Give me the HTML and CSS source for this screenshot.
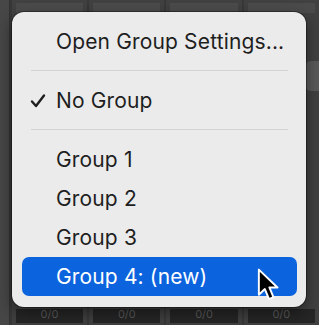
FILE: index.html
```html
<!DOCTYPE html>
<html>
  <head>
    <meta charset="utf-8" />
    <title>Group menu</title>
    <link rel="stylesheet" href="styles.css">
  </head>
  <body>
    <div class="mixer">
      <div class="strip edge"></div>
      <div class="strip">
        <div class="slot"></div>
        <div class="fill"></div>
        <div class="io">0/0</div>
      </div>
      <div class="strip">
        <div class="slot"></div>
        <div class="fill"></div>
        <div class="io">0/0</div>
      </div>
      <div class="strip">
        <div class="slot"></div>
        <div class="fill"></div>
        <div class="io">0/0</div>
      </div>
      <div class="strip">
        <div class="slot"></div>
        <div class="fill"><div class="knob"></div></div>
        <div class="io">0/0</div>
      </div>
    </div>

    <div class="menu">
      <div class="item">Open Group Settings...</div>
      <div class="sep"></div>
      <div class="item">
        <svg class="check" width="16" height="16" viewBox="0 0 16 16">
          <path d="M2 8.5 L6 13 L14 2.5" fill="none" stroke="#1e1e1e" stroke-width="2.4" stroke-linecap="round" stroke-linejoin="round"/>
        </svg>No Group</div>
      <div class="sep"></div>
      <div class="item">Group 1</div>
      <div class="item">Group 2</div>
      <div class="item">Group 3</div>
      <div class="item active">Group 4: (new)</div>
    </div>

    <svg class="cursor" width="28" height="34" viewBox="0 0 17 21">
      <path d="M1 1 L1 16.5 L4.7 13 L7.3 19.2 L10 18 L7.5 12 L12.5 12 Z" fill="#000" stroke="#fff" stroke-width="1.2" stroke-linejoin="round"/>
    </svg>
  </body>
</html>
```

FILE: styles.css
```css
html, body { margin: 0; padding: 0; }
body {
  width: 319px;
  height: 325px;
  overflow: hidden;
  background: #383838;
  font-family: Inter, "Liberation Sans", Arial, sans-serif;
  position: relative;
}

/* mixer in the background */
.mixer { display: flex; gap: 2px; height: 100%; }
.strip { display: flex; flex-direction: column; width: 76px; background: #414141; }
.strip.edge { width: 9px; background: #474747; border-right: 1px solid #333; }
.slot { height: 10px; margin: 3px 4px 0; background: #4b4b4b; }
.fill { flex: 1; position: relative; }
.knob { position: absolute; right: 0; top: 48px; width: 14px; height: 30px; border-radius: 6px 0 0 6px; background: #5a5a5a; }
.io {
  height: 14px;
  margin: 0 4px 2px;
  background: #262626;
  color: #5c5c5c;
  font-size: 11px;
  text-align: center;
  line-height: 10px;
}

/* popup menu */
.menu {
  position: absolute;
  left: 12px;
  top: 12px;
  width: 294px;
  padding: 10px 9px 11px 10px;
  box-sizing: border-box;
  background: #ebebeb;
  border-radius: 12px;
  box-shadow: 0 0 0 1px rgba(0,0,0,0.35), 0 6px 16px rgba(0,0,0,0.45);
}
.item {
  position: relative;
  height: 39px;
  line-height: 39px;
  padding-left: 34px;
  font-size: 21px;
  letter-spacing: 0.15px;
  color: #1e1e1e;
  border-radius: 7px;
  white-space: nowrap;
}
.item.active { background: #0b63dd; color: #fff; }
.check { position: absolute; left: 8px; top: 12px; }
.sep {
  height: 1px;
  margin: 9px 9px 10px;
  background: #d3d3d3;
}

.cursor { position: absolute; left: 257px; top: 268px; }
```
